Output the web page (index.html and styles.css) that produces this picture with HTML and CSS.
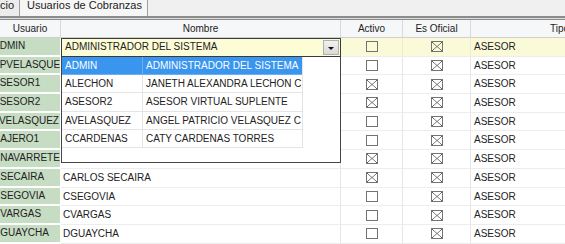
FILE: index.html
```html
<!DOCTYPE html>
<html lang="es">
<head>
  <meta charset="UTF-8" />
  <title>Usuarios de Cobranzas</title>
  <link rel="stylesheet" href="styles.css">
</head>
<body>

  <div class="tabs">
    <div class="tab first">cio</div>
    <div class="tab active">Usuarios de Cobranzas</div>
  </div>
  <div class="rule"></div>

  <div class="grid">
    <div class="row head">
      <div class="cell">Usuario</div>
      <div class="cell">Nombre</div>
      <div class="cell">Activo</div>
      <div class="cell">Es Oficial</div>
      <div class="cell">Tipo</div>
    </div>

    <div class="row current">
      <div class="cell user">ADMIN</div>
      <div class="cell name">
        <div class="combo">
          <span class="combo-text">ADMINISTRADOR DEL SISTEMA</span>
          <span class="combo-btn"><span class="arrow"></span></span>
        </div>
      </div>
      <div class="cell box"><span class="chk"></span></div>
      <div class="cell box"><span class="chk on"></span></div>
      <div class="cell">ASESOR</div>
    </div>

    <div class="row">
      <div class="cell user">APVELASQUEZ</div>
      <div class="cell name"></div>
      <div class="cell box"><span class="chk"></span></div>
      <div class="cell box"><span class="chk on"></span></div>
      <div class="cell">ASESOR</div>
    </div>
    <div class="row">
      <div class="cell user">ASESOR1</div>
      <div class="cell name"></div>
      <div class="cell box"><span class="chk on"></span></div>
      <div class="cell box"><span class="chk on"></span></div>
      <div class="cell">ASESOR</div>
    </div>
    <div class="row">
      <div class="cell user">ASESOR2</div>
      <div class="cell name"></div>
      <div class="cell box"><span class="chk on"></span></div>
      <div class="cell box"><span class="chk on"></span></div>
      <div class="cell">ASESOR</div>
    </div>
    <div class="row">
      <div class="cell user">AVELASQUEZ</div>
      <div class="cell name"></div>
      <div class="cell box"><span class="chk"></span></div>
      <div class="cell box"><span class="chk on"></span></div>
      <div class="cell">ASESOR</div>
    </div>
    <div class="row">
      <div class="cell user">CAJERO1</div>
      <div class="cell name"></div>
      <div class="cell box"><span class="chk"></span></div>
      <div class="cell box"><span class="chk on"></span></div>
      <div class="cell">ASESOR</div>
    </div>
    <div class="row">
      <div class="cell user">CNAVARRETE</div>
      <div class="cell name"></div>
      <div class="cell box"><span class="chk on"></span></div>
      <div class="cell box"><span class="chk on"></span></div>
      <div class="cell">ASESOR</div>
    </div>
    <div class="row">
      <div class="cell user">CSECAIRA</div>
      <div class="cell name">CARLOS SECAIRA</div>
      <div class="cell box"><span class="chk on"></span></div>
      <div class="cell box"><span class="chk on"></span></div>
      <div class="cell">ASESOR</div>
    </div>
    <div class="row">
      <div class="cell user">CSEGOVIA</div>
      <div class="cell name">CSEGOVIA</div>
      <div class="cell box"><span class="chk"></span></div>
      <div class="cell box"><span class="chk on"></span></div>
      <div class="cell">ASESOR</div>
    </div>
    <div class="row">
      <div class="cell user">CVARGAS</div>
      <div class="cell name">CVARGAS</div>
      <div class="cell box"><span class="chk"></span></div>
      <div class="cell box"><span class="chk on"></span></div>
      <div class="cell">ASESOR</div>
    </div>
    <div class="row">
      <div class="cell user">DGUAYCHA</div>
      <div class="cell name">DGUAYCHA</div>
      <div class="cell box"><span class="chk"></span></div>
      <div class="cell box"><span class="chk on"></span></div>
      <div class="cell">ASESOR</div>
    </div>

    <!-- lista desplegable del combo Nombre -->
    <div class="dropdown">
      <div class="list">
        <div class="item selected"><div>ADMIN</div><div>ADMINISTRADOR DEL SISTEMA</div></div>
        <div class="item"><div>ALECHON</div><div>JANETH ALEXANDRA LECHON C</div></div>
        <div class="item"><div>ASESOR2</div><div>ASESOR VIRTUAL SUPLENTE</div></div>
        <div class="item"><div>AVELASQUEZ</div><div>ANGEL PATRICIO VELASQUEZ C</div></div>
        <div class="item"><div>CCARDENAS</div><div>CATY CARDENAS TORRES</div></div>
      </div>
    </div>
  </div>

</body>
</html>
```

FILE: styles.css
```css
* {
  box-sizing: border-box;
}

body {
  margin: 0;
  width: 565px;
  height: 244px;
  overflow: hidden;
  background: #fff;
  font-family: 'Liberation Sans', Arial, sans-serif;
  font-size: 10px;
  color: #222;
}

/* pestañas */
.tabs {
  display: flex;
  height: 16px;
  background: #f0f0f0;
}

.tab {
  height: 16px;
  font-size: 11px;
  line-height: 10px;
  color: #222;
  border-right: 1px solid #a0a0a0;
  white-space: nowrap;
  overflow: hidden;
}

.tab.first {
  width: 20px;
  background: #ececec;
  padding-left: 0;
}

.tab.active {
  width: 128px;
  background: #f6f6f6;
  text-align: center;
  padding-left: 2px;
}

.rule {
  height: 4px;
  border-top: 2px solid #8c8c8c;
  background: #dcdcdc;
  border-bottom: 1px solid #8c8c8c;
}

/* grilla */
.grid {
  position: relative;
  width: 649px;
}

.row {
  display: grid;
  grid-template-columns: 61px 280px 62px 68px 178px;
  height: 18.7px;
}

.row.head {
  height: 18px;
  background: #f6f7f8;
}

.cell {
  border-right: 1px solid #e6e6e6;
  border-bottom: 1px solid #ededed;
  padding: 0 3px;
  line-height: 17.7px;
  white-space: nowrap;
  overflow: hidden;
}

.head .cell {
  text-align: center;
  line-height: 17px;
  border-right: 1px solid #dadada;
  border-bottom: 1px solid #cfcfcf;
}

.cell.user {
  background: #c6dcc3;
  border-right: 1px solid #fff;
  border-bottom: 2px solid #fff;
  padding: 0;
  text-indent: -7px;
  line-height: 16.7px;
}

.cell.name {
  padding-left: 2px;
}

.cell.box {
  display: flex;
  justify-content: center;
  align-items: center;
}

.current .cell {
  background: #fafad9;
  border-right-color: #ebebcf;
}

.current .cell.user {
  background: #c6dcc3;
  border-right-color: #fff;
}

.current .cell.name {
  padding: 0;
  border: none;
  overflow: visible;
}

/* combo */
.combo {
  display: flex;
  align-items: center;
  height: 18.7px;
  border: 1px solid #3a3a3a;
  background: #fcfcd6;
  padding-left: 3px;
}

.combo-text {
  flex: 1;
  line-height: 16px;
}

.combo-btn {
  display: flex;
  justify-content: center;
  align-items: center;
  width: 16px;
  height: 15px;
  margin-right: 1px;
  background: linear-gradient(#f2f2f2, #d9d9d9);
  border: 1px solid #b0b0b0;
}

.arrow {
  width: 0;
  height: 0;
  margin-top: 2px;
  border-left: 3px solid transparent;
  border-right: 3px solid transparent;
  border-top: 3px solid #111;
}

/* casillas */
.chk {
  display: block;
  width: 12px;
  height: 11px;
  border: 1px solid #737373;
  background: #fff;
}

.current .chk {
  background: #fafad9;
}

.chk.on {
  background:
    linear-gradient(to top right, transparent calc(50% - 0.6px), #555 50%, transparent calc(50% + 0.6px)),
    linear-gradient(to bottom right, transparent calc(50% - 0.6px), #555 50%, transparent calc(50% + 0.6px));
}

/* desplegable */
.dropdown {
  position: absolute;
  left: 61px;
  top: 36.7px;
  width: 280px;
  height: 106.5px;
  background: #fff;
  border: 1px solid #454545;
  border-top: none;
}

.list {
  width: 241px;
  border-right: 1px solid #e4e4e4;
}

.item {
  display: grid;
  grid-template-columns: 81px 159px;
  height: 18.3px;
}

.item div {
  padding-left: 3px;
  line-height: 17.3px;
  border-right: 1px solid #e4e4e4;
  border-bottom: 1px solid #e4e4e4;
  white-space: nowrap;
  overflow: hidden;
}

.item div:last-child {
  border-right: none;
}

.item.selected div {
  background: #3a95ee;
  color: #fff;
  border-color: #6cb0f2;
}
```
